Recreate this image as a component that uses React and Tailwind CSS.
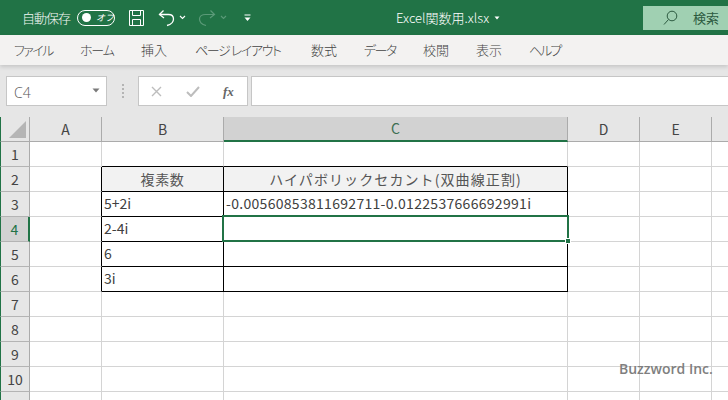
const JP = { fontFamily: '"Noto Sans CJK JP", "Noto Sans", sans-serif' };

const COLS = ['A', 'B', 'C', 'D', 'E', 'F'];
const ROWS = [1, 2, 3, 4, 5, 6, 7, 8, 9, 10, 11];
const TABS = [
  ['ファイル', 'w-[66px] tracking-[-1.6px]'],
  ['ホーム', 'w-[61px] tracking-[-1.2px]'],
  ['挿入', 'w-[54px]'],
  ['ページ レイアウト', 'w-[116px] tracking-[-1.4px]'],
  ['数式', 'w-[53px]'],
  ['データ', 'w-[59px] tracking-[-1.6px]'],
  ['校閲', 'w-[53px]'],
  ['表示', 'w-[53px]'],
  ['ヘルプ', 'w-[50px] tracking-[-2px]'],
];

const CELLS = {
  'B2': { t: '複素数', head: 'tracking-[0.6px]' },
  'C2': { t: 'ハイパボリックセカント(双曲線正割)', head: 'tracking-[1.1px]' },
  'B3': { t: '5+2i' },
  'C3': { t: '-0.00560853811692711-0.0122537666692991i', wide: true },
  'B4': { t: '2-4i' },
  'C4': { t: '' },
  'B5': { t: '6' },
  'C5': { t: '' },
  'B6': { t: '3i' },
  'C6': { t: '' },
};

function Cell({ col, row }) {
  const key = col + row;
  const c = CELLS[key];
  const base = 'h-[25px] border-b border-r flex items-center text-[14px] text-[#404040] whitespace-nowrap ';
  let extra = 'border-[#d4d4d4] ';
  if (c) {
    extra = 'border-black ';
    if (c.head) extra += 'bg-[#f2f2f2] justify-center text-[#555555] ' + c.head + ' ';
    else extra += 'pl-[2px] pb-[1px] ';
    if (c.wide) extra += 'tracking-[0.3px] ';
  } else {
    // neighbours of the black box share its edges
    if (col === 'A' && row >= 2 && row <= 6) extra += 'border-r-black ';
    if (row === 1 && (col === 'B' || col === 'C')) extra += 'border-b-black ';
  }
  return <div className={base + extra}>{c ? c.t : ''}</div>;
}

export default function App() {
  return (
    <div className="relative w-[728px] h-[400px] overflow-hidden bg-white" style={JP}>
      {/* Title bar */}
      <div className="h-[35px] bg-[#217346] flex items-center text-white">
        <span className="ml-[22px] text-[13px] tracking-[-1px] text-[#f4f8f5] font-light">自動保存</span>
        <div className="ml-[7px] w-[38px] h-[16px] rounded-full border border-white flex items-center relative">
          <span className="ml-[4px] w-[9px] h-[9px] rounded-full bg-white" />
          <span className="ml-[5px] text-[9px] leading-none italic">オフ</span>
        </div>
        <svg className="ml-[13px]" width="17" height="18" viewBox="0 0 17 18" fill="none" stroke="#fff" strokeWidth="1">
          <path d="M1.5 1.5h14v15h-14z" />
          <path d="M4.5 1.5v5h8v-5M4.5 16.5v-6h8v6" />
        </svg>
        <svg className="ml-[13px]" width="18" height="18" viewBox="0 0 18 18" fill="none" stroke="#fff" strokeWidth="1.3">
          <path d="M5.5 1.5L1.5 5.5L6 9" />
          <path d="M1.5 5.5H10.5C14 5.5 15.5 7.5 15.5 10C15.5 13 13 15.5 9 16.5" />
        </svg>
        <svg className="ml-[3px]" width="7" height="5" viewBox="0 0 7 5" fill="none" stroke="#fff" strokeWidth="1.1">
          <path d="M1 1L3.5 3.5L6 1" />
        </svg>
        <svg className="ml-[12px]" width="18" height="18" viewBox="0 0 18 18" fill="none" stroke="#5b9a78" strokeWidth="1.2">
          <path d="M12.5 1.5L16.5 5.5L12 9" />
          <path d="M16.5 5.5H7.5C4 5.5 1.5 7.5 1.5 10C1.5 13 4 15.5 8 16.5" />
        </svg>
        <svg className="ml-[4px]" width="7" height="5" viewBox="0 0 7 5" fill="none" stroke="#5b9a78" strokeWidth="1.1">
          <path d="M1 1L3.5 3.5L6 1" />
        </svg>
        <svg className="ml-[17px]" width="7" height="8" viewBox="0 0 7 8" fill="#fff">
          <rect x="0.5" y="0.5" width="6" height="1" />
          <path d="M0.5 3.5h6L3.5 7z" />
        </svg>
        <span className="ml-[145px] text-[13px] font-light whitespace-nowrap">Excel関数用.xlsx</span>
        <svg className="ml-[5px]" width="6" height="4" viewBox="0 0 6 4" fill="#fff"><path d="M0.5 0.5h5L3 3.5z" /></svg>
        <div className="ml-auto w-[85px] h-[24px] mt-[1px] bg-[#a0d0b2] flex items-center text-[#2c5a40]">
          <svg className="ml-[20px]" width="15" height="16" viewBox="0 0 15 16" fill="none" stroke="#2c5a40" strokeWidth="1">
            <circle cx="9" cy="6" r="4.8" />
            <path d="M5.5 9.5L1 14.5" />
          </svg>
          <span className="ml-[15px] text-[13px] whitespace-nowrap">検索</span>
        </div>
      </div>

      {/* Ribbon tabs */}
      <div className="relative z-10 h-[30px] bg-[#f3f2f1] flex items-center text-[13px] text-[#444444] pl-[5px] pb-[1px] shadow-[0_2px_4px_rgba(0,0,0,0.14)] font-light [font-feature-settings:'palt']">
        {TABS.map(([t, w]) => (
          <div key={t} className={w + ' pl-[9px] whitespace-nowrap'}>{t}</div>
        ))}
      </div>

      {/* Formula bar */}
      <div className="h-[52px] bg-[#e6e6e6] flex items-center pl-[6px]">
        <div className="w-[101px] h-[30px] bg-white border border-[#c6c6c6] flex items-center justify-between pl-[7px] pr-[6px] pt-[3px] text-[14px] text-[#555555] font-light" style={{ fontFamily: '"Open Sans", sans-serif' }}>
          <span>C4</span>
          <svg className="mb-[5px]" width="8" height="5" viewBox="0 0 8 5" fill="#7a7a7a"><path d="M0.5 0.5h7L4 4.5z" /></svg>
        </div>
        <div className="w-[31px] flex flex-col items-center gap-[2px]">
          <span className="w-[2px] h-[2px] bg-[#b4b4b4]" />
          <span className="w-[2px] h-[2px] bg-[#b4b4b4]" />
          <span className="w-[2px] h-[2px] bg-[#b4b4b4]" />
          <span className="w-[2px] h-[2px] bg-[#b4b4b4]" />
        </div>
        <div className="w-[110px] h-[30px] bg-white border border-[#c6c6c6] flex items-center">
          <svg className="ml-[12px]" width="11" height="11" viewBox="0 0 11 11" stroke="#bdbdbd" strokeWidth="1.4" fill="none"><path d="M1 1l9 9M10 1l-9 9" /></svg>
          <svg className="ml-[24px]" width="14" height="11" viewBox="0 0 14 11" stroke="#bdbdbd" strokeWidth="2" fill="none"><path d="M1 6l4 4l8-9" /></svg>
          <span className="ml-[23px] text-[13px] font-bold italic text-[#666666] leading-none" style={{ fontFamily: '"Liberation Serif", serif' }}>fx</span>
        </div>
        <div className="ml-[3px] flex-1 h-[30px] bg-white border-y border-l border-[#c6c6c6]" />
      </div>

      {/* Sheet */}
      <div className="grid grid-cols-[30px_72px_122px_344px_72px_72px_72px] text-[14px]">
        {/* Header row */}
        <div className="h-[25px] bg-[#e6e6e6] border-b border-r border-[#ababab] border-l-[1px] border-l-[#217346] flex items-end justify-end pr-[3px] pb-[3px]">
          <svg width="17" height="17" viewBox="0 0 17 17"><path d="M17 0V17H0z" fill="#b5b5b5" /></svg>
        </div>
        {COLS.map((c) => (
          <div
            key={c}
            className={
              'h-[25px] border-r border-b flex items-center justify-center text-[14px] ' +
              (c === 'C'
                ? 'bg-[#d2d2d2] border-[#ababab] border-b-[#217346] border-b-2 text-[#3d6f52]'
                : 'bg-[#e6e6e6] border-[#ababab] text-[#444444]')
            }
          >
            {c}
          </div>
        ))}

        {/* Rows */}
        {ROWS.map((r) => (
          <div key={r} className="contents">
            <div
              className={
                'h-[25px] border-b border-[#b4b4b4] border-l border-l-[#217346] flex items-center justify-center text-[14px] ' +
                (r === 4
                  ? 'bg-[#d2d2d2] border-r-2 border-r-[#217346] text-[#217346]'
                  : 'bg-[#e6e6e6] border-r border-r-[#ababab] text-[#444444]')
              }
            >
              {r}
            </div>
            {COLS.map((c) => (
              <Cell key={c} col={c} row={r} />
            ))}
          </div>
        ))}
      </div>

      {/* Selection box */}
      <div className="absolute left-[222px] top-[215px] w-[347px] h-[27px] border-2 border-[#217346]">
        <span className="absolute right-[-4px] bottom-[-4px] w-[6px] h-[6px] bg-[#217346] border border-white" />
      </div>

      {/* Watermark */}
      <div className="absolute left-[619px] top-[358px] text-[14px] font-semibold text-[#7f7f7f] whitespace-nowrap" style={{ fontFamily: '"Open Sans", sans-serif' }}>
        Buzzword Inc.
      </div>
    </div>
  );
}
